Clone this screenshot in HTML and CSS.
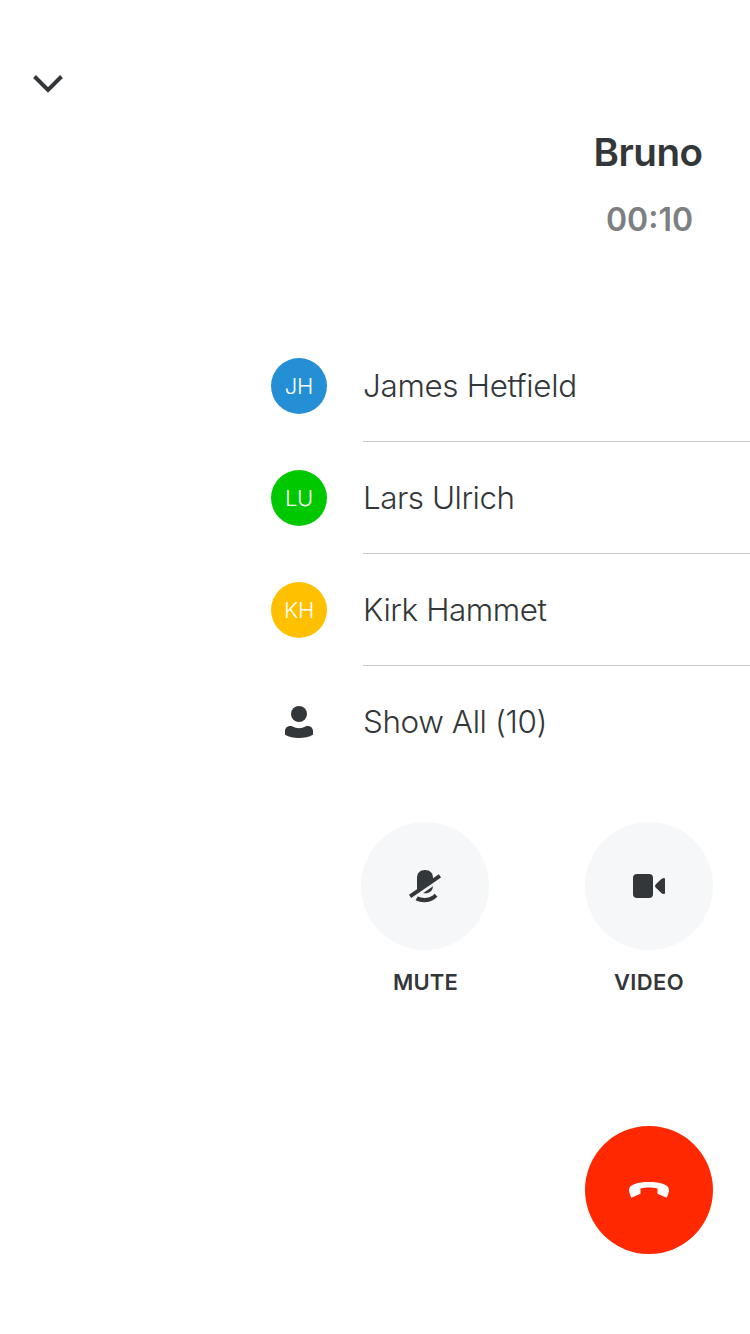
FILE: index.html
```html
<!DOCTYPE html>
<html lang="en">
<head>
<meta charset="utf-8">
<title>Group call</title>
<link rel="stylesheet" href="styles.css">
</head>
<body>
<main class="call">
  <button class="collapse" aria-label="Minimize">
    <svg width="32" height="22" viewBox="0 0 32 22"><path d="M2.500 3.500 16 17 29.500 3.500" fill="none" stroke="currentColor" stroke-width="4"/></svg>
  </button>
  <header class="heading">
    <h1 class="title"><span>Bruno</span></h1>
    <p class="timer"><span>00:10</span></p>
  </header>
  <ul class="people">
    <li class="person"><span class="avatar blue">JH</span><div class="name"><span class="james">James Hetfield</span></div></li>
    <li class="person"><span class="avatar green">LU</span><div class="name"><span class="lars">Lars Ulrich</span></div></li>
    <li class="person"><span class="avatar yellow">KH</span><div class="name"><span class="kirk">Kirk Hammet</span></div></li>
    <li class="person"><span class="avatar"><svg width="32" height="32" viewBox="0 0 32 32" fill="currentColor"><circle cx="16" cy="8" r="8"/><path d="M2 25.500C2 21.500 4.500 20 7.500 20C10 20 11 22.200 16 22.200S22 20 24.500 20C27.500 20 30 21.500 30 25.500V28.800C26 31 21.500 32 16 32S6 31 2 28.800Z"/></svg></span><div class="name"><span class="all">Show All (10)</span></div></li>
  </ul>
  <section class="controls">
    <div class="control">
      <button class="round" aria-label="Mute"><svg width="34" height="34" viewBox="0 1 34 34" fill="currentColor"><path d="M9 21.500V10C9 5 12 2 17 2S25 5 25 10V10.800L9 21.800Z"/><path d="M15 25.300 25 18.200C24.800 22.500 21.500 25.300 17 25.300Z"/><path d="M1 26.700 30.800 6.200 33 9.400 3.200 29.900Z"/><path d="M7.500 32.300 9.700 28.600C16 31.200 22 30.200 26.800 25.700L29.400 28.700C23.300 34.700 15 35.700 7.500 32.300Z"/></svg></button>
      <span class="label mute">MUTE</span>
    </div>
    <div class="control">
      <button class="round" aria-label="Video"><svg width="34" height="34" viewBox="0 0 34 34" fill="currentColor"><rect x="1" y="5" width="20" height="24" rx="4"/><path d="M23.600 18.400Q22.300 17 23.600 15.600L28.800 10.500Q30.200 9 32 9Q33 9 33 10V24Q33 25 32 25Q30.200 25 28.800 23.500Z"/></svg></button>
      <span class="label video">VIDEO</span>
    </div>
  </section>
  <footer class="end">
    <button class="round hangup" aria-label="End call"><svg width="40" height="18" viewBox="0 0 40 18" fill="currentColor"><path d="M2.400 16.800C.8 13.600 0 10.800 0 8.800C0 3.500 9 1 20 1S40 3.500 40 8.800C40 10.800 39.200 13.600 37.600 16.800L28.500 12.800V7.600C25.500 6.700 23 6.500 20 6.500S14.500 6.700 11.500 7.600V12.800Z"/></svg></button>
  </footer>
</main>
</body>
</html>
```
FILE: styles.css
```css
* { box-sizing: border-box; }
body { margin: 0; background: #fff; color: #33373a; font-family: Inter, "Liberation Sans", sans-serif; }
button { padding: 0; border: 0; background: none; color: inherit; }
svg { display: block; }
.call { width: 750px; height: 1334px; overflow: hidden; padding-top: 73px; }
.collapse { display: block; margin-left: 32px; height: 22px; }
.heading { margin: 26px 0 0 546px; width: 204px; text-align: center; }
.title { margin: 0; height: 62px; line-height: 62px; font-size: 38.6px; font-weight: 600; letter-spacing: -.5px; }
.timer { margin: 16px 0 0; padding-left: 3px; height: 42px; line-height: 42px; font-size: 32px; font-weight: 600; color: #7d8082; }
.people { list-style: none; margin: 89px 0 0; padding: 0 0 0 271px; }
.person { display: flex; align-items: center; gap: 36px; height: 112px; }
.avatar { display: flex; align-items: center; justify-content: center; width: 56px; height: 56px; border-radius: 50%; font-size: 22px; font-weight: 300; letter-spacing: -.2px; }
.blue, .green, .yellow { color: #fff; }
.blue { background: #258fd6; }
.green { background: #00c800; }
.yellow { background: #ffc000; }
.name { flex: 1; height: 112px; line-height: 112px; border-bottom: 1px solid #c7c9ca; font-size: 31.4px; font-weight: 300; }
.james { letter-spacing: -.32px; }
.lars { letter-spacing: -.46px; }
.kirk { letter-spacing: -.4px; }
.all { letter-spacing: -.38px; }
.person:last-child .name { border-bottom: 0; }
.controls { display: flex; gap: 96px; margin: 44px 0 0 361px; }
.control { width: 128px; display: flex; flex-direction: column; align-items: center; }
.round { display: flex; align-items: center; justify-content: center; width: 128px; height: 128px; border-radius: 50%; background: #f5f7f9; }
.label { margin-top: 17px; height: 30px; line-height: 30px; font-size: 22px; font-weight: 600; letter-spacing: .4px; }
.mute { padding-left: 1px; letter-spacing: .2px; }
.end { margin: 129px 0 0 585px; }
.hangup { background: #ff2800; color: #fff; }
```
